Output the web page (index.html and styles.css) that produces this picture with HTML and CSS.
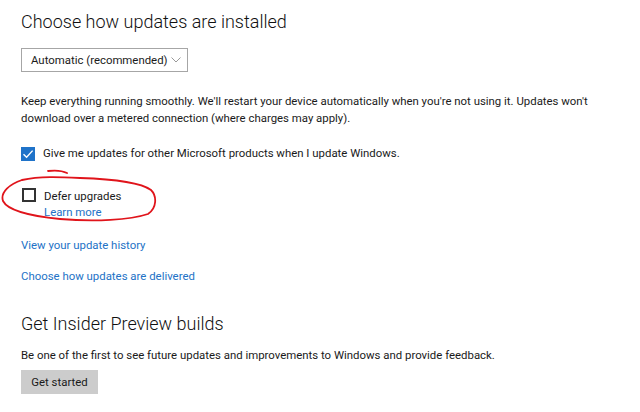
FILE: index.html
```html
<!DOCTYPE html>
<html>
<head>
<meta charset="utf-8">
<link rel="stylesheet" href="styles.css">
</head>
<body>
<main class="page">
  <h1 class="title">Choose how updates are installed</h1>
  <div class="select">
    <span>Automatic (recommended)</span>
    <svg class="chev" width="10" height="6" viewBox="0 0 10 6"><polyline points="0.5,0.5 5,5 9.5,0.5" fill="none" stroke="#999" stroke-width="1"/></svg>
  </div>
  <p class="desc">Keep everything running smoothly. We'll restart your device automatically when you're not using it. Updates won't download over a metered connection (where charges may apply).</p>
  <div class="check-row">
    <span class="box checked"><svg width="14" height="14" viewBox="0 0 14 14"><polyline points="2.5,7.2 5.6,10.3 11.6,3.6" fill="none" stroke="#fff" stroke-width="1.4"/></svg></span>
    <span>Give me updates for other Microsoft products when I update Windows.</span>
  </div>
  <div class="defer">
    <svg class="circle" width="170" height="64" viewBox="0 0 170 64"><path d="M48 5 C56 4 63 5 67 7 M22 14 C40 10 60 11 80 12 C110 13 140 16 151 24 C157 30 157 42 148 48 C130 54 95 56 60 53 C30 50 8 45 3 35 C0 26 10 18 22 14" fill="none" stroke="#e0141b" stroke-width="1.8" stroke-linecap="round"/></svg>
    <span class="box"></span>
    <div class="defer-text">
      <span>Defer upgrades</span>
      <a class="link" href="#">Learn more</a>
    </div>
  </div>
  <a class="link nav first" href="#">View your update history</a>
  <a class="link nav second" href="#">Choose how updates are delivered</a>
  <h2 class="title sub">Get Insider Preview builds</h2>
  <p class="desc2">Be one of the first to see future updates and improvements to Windows and provide feedback.</p>
  <button class="btn">Get started</button>
</main>
</body>
</html>
```
FILE: styles.css
```css
html, body {
  margin: 0;
  padding: 0;
  background: #fff;
}
.page {
  padding: 8px 0 0 21px;
  font-family: Roboto, "Segoe UI", sans-serif;
  font-size: 11.4px;
  color: #1a1a1a;
}
.title {
  margin: 0;
  font-weight: 300;
  font-size: 18px;
  line-height: 28px;
  color: #111;
}
.select {
  margin-top: 12px;
  height: 22px;
  width: 167px;
  border: 1px solid #a6a6a6;
  display: flex;
  align-items: center;
  justify-content: space-between;
  padding: 0 6px 0 9px;
  box-sizing: border-box;
  white-space: nowrap;
  height: 24px;
}
.chev { display: block; flex: none; }
.desc {
  margin: 21px 0 0 0;
  line-height: 17px;
  width: 600px;
}
.check-row {
  margin-top: 18px;
  display: flex;
  align-items: center;
  gap: 8px;
  line-height: 17px;
}
.box {
  width: 14px;
  height: 14px;
  box-sizing: border-box;
  border: 2px solid #333;
  flex: none;
}
.box.checked {
  border: none;
  background: #1f73c9;
}
.box.checked svg { display: block; }
.defer {
  position: relative;
  margin-top: 26px;
  display: flex;
  align-items: flex-start;
  gap: 8px;
  line-height: 16px;
  padding-left: 1px;
}
.defer-text {
  display: flex;
  flex-direction: column;
}
.circle {
  position: absolute;
  left: -21px;
  top: -22px;
}
.link {
  color: #2372c6;
  text-decoration: none;
}
.nav {
  display: block;
  line-height: 17px;
}
.nav.first { margin-top: 17px; }
.nav.second { margin-top: 14px; }
.sub { margin-top: 25px; }
.desc2 {
  margin: 9px 0 0 0;
  line-height: 17px;
}
.btn {
  margin-top: 6px;
  width: 77px;
  height: 24px;
  border: none;
  background: #cccccc;
  font: inherit;
  color: #1a1a1a;
  padding: 0;
}
```
